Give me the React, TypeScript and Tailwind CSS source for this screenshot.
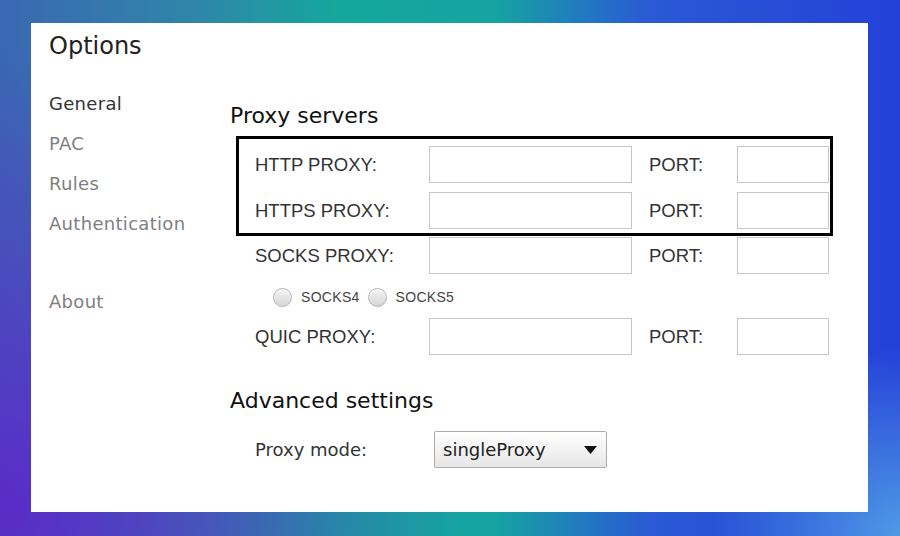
import React from 'react';

const ProxyRow = ({ label }: { label: string }) => (
  <div className="flex items-center h-[37px]">
    <span className="w-[174px] font-['Liberation_Sans',sans-serif] text-[18.5px] text-[#333]">{label}</span>
    <input className="w-[203px] h-full border border-[#c6c6c6] bg-white outline-none" />
    <span className="ml-[17px] w-[88px] font-['Liberation_Sans',sans-serif] text-[18.5px] text-[#333]">PORT:</span>
    <input className="w-[92px] h-full border border-[#c6c6c6] bg-white outline-none" />
  </div>
);

const Radio = ({ label }: { label: string }) => (
  <label className="flex items-center gap-[9px] h-[19px]">
    <span className="w-[19px] h-[19px] rounded-full border border-[#b4b4b4] bg-[linear-gradient(to_bottom,#f4f4f4,#d6d6d6)] shadow-[inset_0_1px_1px_rgba(255,255,255,0.9)]" />
    <span className="font-['Liberation_Sans',sans-serif] text-[14px] leading-[19px] text-[#444] tracking-[0.3px]">{label}</span>
  </label>
);

const App: React.FC = () => {
  const nav = ['PAC', 'Rules', 'Authentication'];

  return (
    <div className="w-[900px] h-[536px] overflow-hidden pt-[23px] pl-[31px] bg-[radial-gradient(circle_at_0%_95%,#5a2cc8_0%,rgba(90,44,200,0)_45%),radial-gradient(circle_at_100%_100%,#4f9ae6_0%,rgba(79,154,230,0)_18%),linear-gradient(90deg,#3a68b2_0%,#2f86a8_22%,#14a89c_38%,#16a3a2_55%,#2a5ad4_72%,#2440d8_100%)]">
      <div className="w-[837px] h-[489px] bg-white pl-[18px] pt-[9px] font-['DejaVu_Sans',sans-serif]">
        <h1 className="text-[24px] leading-[28px] text-[#222]">Options</h1>

        <div className="flex mt-[24px]">
          {/* sidebar */}
          <nav className="w-[181px] flex flex-col text-[18px] tracking-[0.3px]">
            <span className="h-[40px] leading-[40px] text-[#333]">General</span>
            {nav.map((n) => (
              <span key={n} className="h-[40px] leading-[40px] text-[#808080]">{n}</span>
            ))}
            <span className="h-[40px] leading-[40px] text-[#808080] mt-[38px]">About</span>
          </nav>

          {/* main */}
          <div className="pt-[18px]">
            <h2 className="text-[22px] leading-[28px] text-[#111]">Proxy servers</h2>

            <div className="mt-[6px] ml-[6px] w-[597px] border-[3px] border-black pl-[16px] pt-[7px] pb-[4px] flex flex-col gap-[9px]">
              <ProxyRow label="HTTP PROXY:" />
              <ProxyRow label="HTTPS PROXY:" />
            </div>

            <div className="pl-[25px] mt-[1px]">
              <ProxyRow label="SOCKS PROXY:" />
            </div>

            <div className="pl-[43px] mt-[14px] flex items-center gap-[8px]">
              <Radio label="SOCKS4" />
              <Radio label="SOCKS5" />
            </div>

            <div className="pl-[25px] mt-[11px]">
              <ProxyRow label="QUIC PROXY:" />
            </div>

            <h2 className="mt-[32px] text-[22px] leading-[28px] text-[#111]">Advanced settings</h2>

            <div className="pl-[25px] mt-[16px] flex items-center h-[37px]">
              <span className="w-[179px] text-[18px] text-[#333]">Proxy mode:</span>
              <div className="w-[173px] h-full flex items-center justify-between pl-[8px] pr-[9px] border border-[#ababab] rounded-[2px] bg-[linear-gradient(to_bottom,#ffffff,#e6e6e6)]">
                <span className="text-[18px] text-[#222]">singleProxy</span>
                <svg width="13" height="8" viewBox="0 0 13 8">
                  <path d="M0 0 H13 L6.5 8 Z" fill="#111" />
                </svg>
              </div>
            </div>
          </div>
        </div>
      </div>
    </div>
  );
};

export default App;
